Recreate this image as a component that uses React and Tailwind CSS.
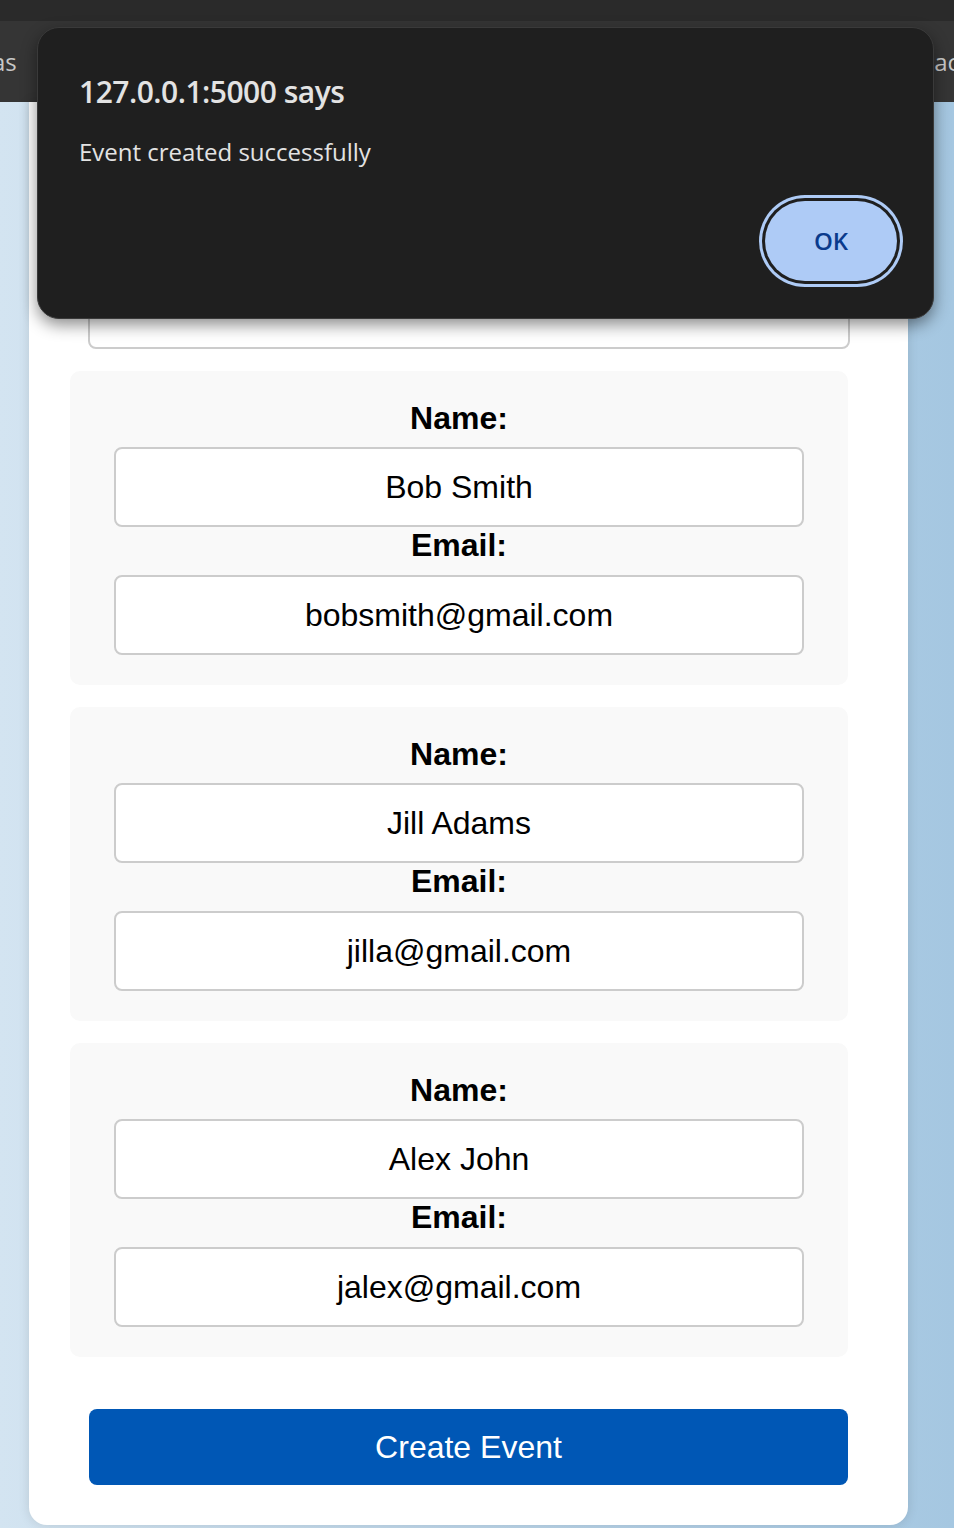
import React from "react";

const people = [
  { name: "Bob Smith", email: "bobsmith@gmail.com" },
  { name: "Jill Adams", email: "jilla@gmail.com" },
  { name: "Alex John", email: "jalex@gmail.com" },
];

function Participant({ name, email }) {
  return (
    <div className="bg-[#f9f9f9] rounded-[10px] ml-[41px] w-[778px] h-[314px] px-[44px] pt-[29px] flex flex-col">
      <div className="h-[36px] leading-[36px] text-center font-bold text-[32px] text-black mb-[11px]">Name:</div>
      <div className="h-[80px] bg-white border-2 border-[#cccccc] rounded-[8px] flex items-center justify-center text-[32px] text-black">
        {name}
      </div>
      <div className="h-[36px] leading-[36px] text-center font-bold text-[32px] text-black mb-[12px]">Email:</div>
      <div className="h-[80px] bg-white border-2 border-[#cccccc] rounded-[8px] flex items-center justify-center text-[32px] text-black">
        {email}
      </div>
    </div>
  );
}

export default function App() {
  return (
    <div
      className="relative w-[954px] h-[1528px] overflow-hidden bg-gradient-to-r from-[#d3e4f1] to-[#a5c7e1]"
      style={{ fontFamily: '"Liberation Sans", Arial, sans-serif' }}
    >
      <div className="h-[21px] bg-[#2a2a2a]" />
      <div
        className="h-[81px] bg-[#353535] flex items-center justify-between text-[#c8c8c8] text-[24px]"
        style={{ fontFamily: '"Open Sans", "Noto Sans", sans-serif' }}
      >
        <span className="-ml-[8px]">as</span>
        <span className="-mr-[5px]">ac</span>
      </div>

      <div className="ml-[29px] w-[879px] h-[1423px] bg-white rounded-b-[18px] shadow-[0_0_12px_rgba(0,0,0,0.12)] pt-[168px]">
        <div className="ml-[59px] w-[762px] h-[79px] border-2 border-[#cccccc] rounded-[8px] bg-white" />
        <div className="mt-[22px] flex flex-col gap-[22px]">
          {people.map((p) => (
            <Participant key={p.name} {...p} />
          ))}
        </div>
        <button className="mt-[52px] ml-[60px] w-[759px] h-[76px] bg-[#0057b5] rounded-[8px] text-white text-[32px] flex items-center justify-center">
          Create Event
        </button>
      </div>

      <div
        className="absolute left-[37px] top-[27px] w-[897px] h-[292px] bg-[#1f1f1f] rounded-[22px] border border-[#3a3a3a] shadow-[0_6px_16px_rgba(0,0,0,0.45)]"
        style={{ fontFamily: '"Open Sans", "Noto Sans", sans-serif' }}
      >
        <div className="absolute left-[41px] top-[49px] text-[30px] font-semibold text-[#e3e3e3] leading-none tracking-[-0.5px]">
          127.0.0.1:5000 says
        </div>
        <div className="absolute left-[41px] top-[112px] text-[24px] text-[#e3e3e3] leading-none">
          Event created successfully
        </div>
        <button className="absolute left-[727px] top-[173px] w-[132px] h-[80px] rounded-full bg-[#aecbf6] shadow-[0_0_0_3px_#1f1f1f,0_0_0_6px_#aecbf6] text-[#0a3a8c] text-[24px] font-semibold flex items-center justify-center">
          OK
        </button>
      </div>
    </div>
  );
}
